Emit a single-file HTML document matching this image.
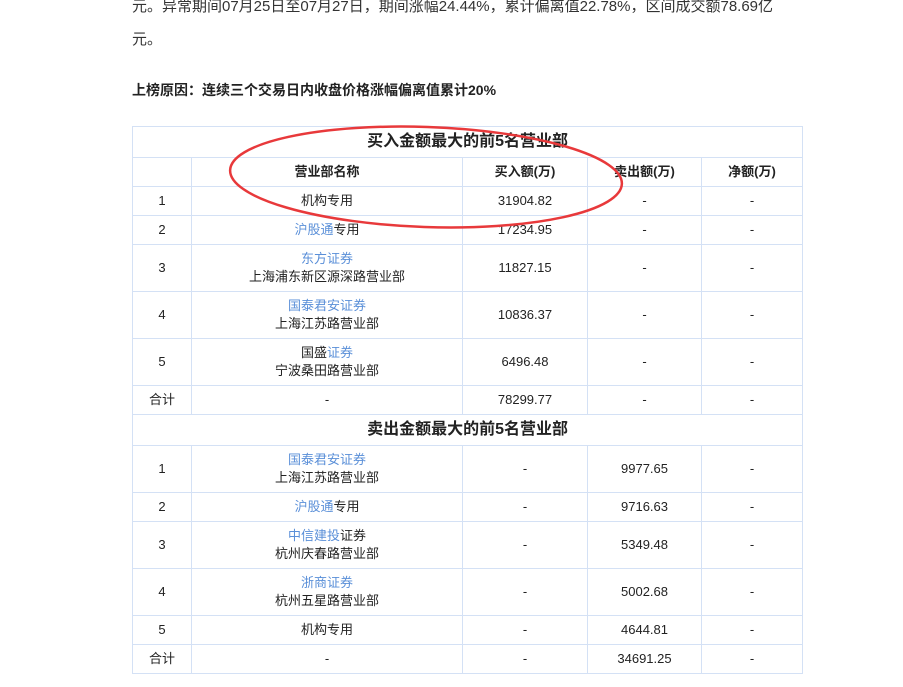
<!DOCTYPE html>
<html><head><meta charset="utf-8"><style>
body{margin:0;width:903px;height:687px;overflow:hidden;background:#fff;position:relative;font-family:"Liberation Sans","Noto Sans CJK SC",sans-serif;color:#222;}
.p{position:absolute;left:132px;font-size:15px;white-space:nowrap;color:#333}
table{position:absolute;left:132px;top:126px;width:670px;border-collapse:collapse;font-size:13px;table-layout:fixed}
td{border:1px solid #d4e1f5;text-align:center;padding:0;line-height:18px;color:#222}
.t td{font-size:16px;font-weight:bold;height:30px}
.h td{font-weight:bold;height:28px}
.s{height:29px}.d{height:47px}
.b{color:#5a8fd8}
</style></head><body>
<div class="p" style="top:-5px">元。异常期间07月25日至07月27日，期间涨幅24.44%，累计偏离值22.78%，区间成交额78.69亿</div>
<div class="p" style="top:28px">元。</div>
<div class="p" style="top:80px;font-weight:bold;font-size:14px;color:#222">上榜原因：连续三个交易日内收盘价格涨幅偏离值累计20%</div>
<table>
<colgroup><col style="width:59px"><col style="width:271px"><col style="width:125px"><col style="width:114px"><col style="width:101px"></colgroup>
<tr class="t"><td colspan="5">买入金额最大的前5名营业部</td></tr>
<tr class="h"><td></td><td>营业部名称</td><td>买入额(万)</td><td>卖出额(万)</td><td>净额(万)</td></tr>
<tr class="s"><td>1</td><td>机构专用</td><td>31904.82</td><td>-</td><td>-</td></tr>
<tr class="s"><td>2</td><td><span class="b">沪股通</span>专用</td><td>17234.95</td><td>-</td><td>-</td></tr>
<tr class="d"><td>3</td><td><span class="b">东方证券</span><br>上海浦东新区源深路营业部</td><td>11827.15</td><td>-</td><td>-</td></tr>
<tr class="d"><td>4</td><td><span class="b">国泰君安证券</span><br>上海江苏路营业部</td><td>10836.37</td><td>-</td><td>-</td></tr>
<tr class="d"><td>5</td><td>国盛<span class="b">证券</span><br>宁波桑田路营业部</td><td>6496.48</td><td>-</td><td>-</td></tr>
<tr class="s"><td>合计</td><td>-</td><td>78299.77</td><td>-</td><td>-</td></tr>
<tr class="t"><td colspan="5">卖出金额最大的前5名营业部</td></tr>
<tr class="d"><td>1</td><td><span class="b">国泰君安证券</span><br>上海江苏路营业部</td><td>-</td><td>9977.65</td><td>-</td></tr>
<tr class="s"><td>2</td><td><span class="b">沪股通</span>专用</td><td>-</td><td>9716.63</td><td>-</td></tr>
<tr class="d"><td>3</td><td><span class="b">中信建投</span>证券<br>杭州庆春路营业部</td><td>-</td><td>5349.48</td><td>-</td></tr>
<tr class="d"><td>4</td><td><span class="b">浙商证券</span><br>杭州五星路营业部</td><td>-</td><td>5002.68</td><td>-</td></tr>
<tr class="s"><td>5</td><td>机构专用</td><td>-</td><td>4644.81</td><td>-</td></tr>
<tr class="s"><td>合计</td><td>-</td><td>-</td><td>34691.25</td><td>-</td></tr>
</table>
<svg style="position:absolute;left:0;top:0" width="903" height="687"><ellipse cx="426" cy="177" rx="196" ry="50" transform="rotate(2 426 177)" fill="none" stroke="#e8393b" stroke-width="2.5"/></svg>
</body></html>
